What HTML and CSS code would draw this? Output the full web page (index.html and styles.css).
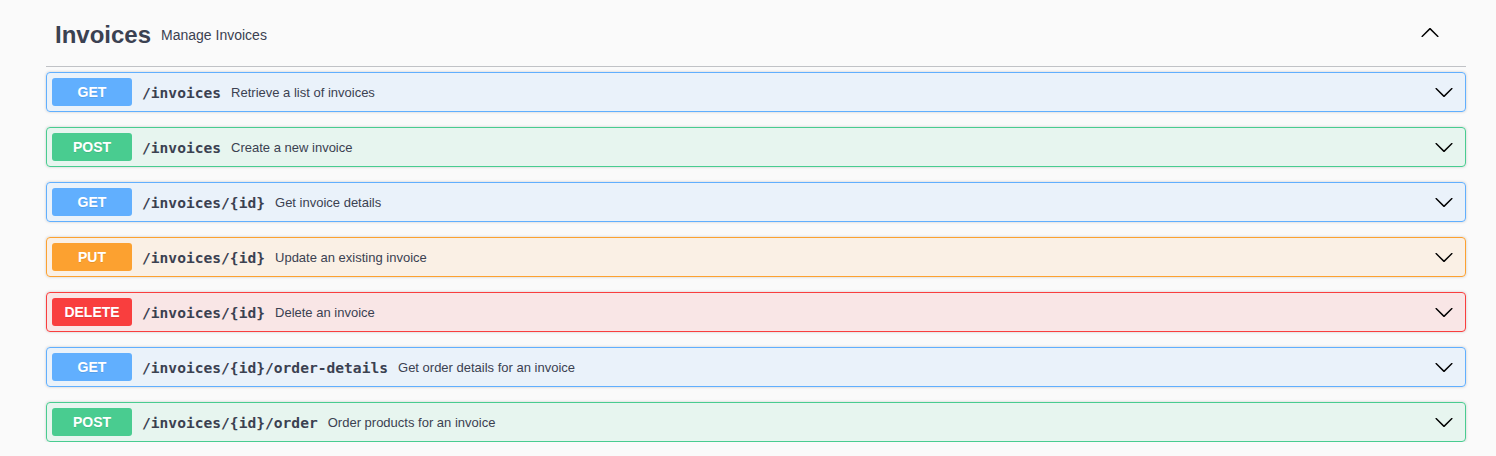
FILE: index.html
```html
<!DOCTYPE html>
<html lang="en">
<head>
<meta charset="utf-8">
<title>Invoices</title>
<link rel="stylesheet" href="styles.css">
</head>
<body>
<div class="page">
  <section class="tag-section">
    <h3 class="tag-header">
      <span class="tag-title">Invoices</span>
      <small class="tag-desc">Manage Invoices</small>
      <button class="tag-toggle" aria-label="Collapse">
        <svg width="20" height="20" viewBox="0 0 20 20"><path d="M17.418 14.908c.272.268.709.268.979 0s.271-.701 0-.969l-7.908-7.83c-.27-.268-.707-.268-.979 0l-7.908 7.83c-.27.268-.27.701 0 .969.271.268.709.268.979 0L10 7.77l7.418 7.138z"/></svg>
      </button>
    </h3>
    <div class="ops">
      <div class="op op-get">
        <span class="method">GET</span>
        <span class="path">/invoices</span>
        <span class="desc">Retrieve a list of invoices</span>
        <svg class="arrow" width="20" height="20" viewBox="0 0 20 20"><path d="M17.418 6.109c.272-.268.709-.268.979 0s.271.701 0 .969l-7.908 7.83c-.27.268-.707.268-.979 0l-7.908-7.83c-.27-.268-.27-.701 0-.969.271-.268.709-.268.979 0L10 13.25l7.418-7.141z"/></svg>
      </div>
      <div class="op op-post">
        <span class="method">POST</span>
        <span class="path">/invoices</span>
        <span class="desc">Create a new invoice</span>
        <svg class="arrow" width="20" height="20" viewBox="0 0 20 20"><path d="M17.418 6.109c.272-.268.709-.268.979 0s.271.701 0 .969l-7.908 7.83c-.27.268-.707.268-.979 0l-7.908-7.830c-.27-.268-.27-.701 0-.969.271-.268.709-.268.979 0L10 13.25l7.418-7.141z"/></svg>
      </div>
      <div class="op op-get">
        <span class="method">GET</span>
        <span class="path">/invoices/{id}</span>
        <span class="desc">Get invoice details</span>
        <svg class="arrow" width="20" height="20" viewBox="0 0 20 20"><path d="M17.418 6.109c.272-.268.709-.268.979 0s.271.701 0 .969l-7.908 7.83c-.27.268-.707.268-.979 0l-7.908-7.83c-.27-.268-.27-.701 0-.969.271-.268.709-.268.979 0L10 13.25l7.418-7.141z"/></svg>
      </div>
      <div class="op op-put">
        <span class="method">PUT</span>
        <span class="path">/invoices/{id}</span>
        <span class="desc">Update an existing invoice</span>
        <svg class="arrow" width="20" height="20" viewBox="0 0 20 20"><path d="M17.418 6.109c.272-.268.709-.268.979 0s.271.701 0 .969l-7.908 7.83c-.27.268-.707.268-.979 0l-7.908-7.83c-.27-.268-.27-.701 0-.969.271-.268.709-.268.979 0L10 13.25l7.418-7.141z"/></svg>
      </div>
      <div class="op op-delete">
        <span class="method">DELETE</span>
        <span class="path">/invoices/{id}</span>
        <span class="desc">Delete an invoice</span>
        <svg class="arrow" width="20" height="20" viewBox="0 0 20 20"><path d="M17.418 6.109c.272-.268.709-.268.979 0s.271.701 0 .969l-7.908 7.83c-.27.268-.707.268-.979 0l-7.908-7.83c-.27-.268-.27-.701 0-.969.271-.268.709-.268.979 0L10 13.25l7.418-7.141z"/></svg>
      </div>
      <div class="op op-get">
        <span class="method">GET</span>
        <span class="path">/invoices/{id}/order-details</span>
        <span class="desc">Get order details for an invoice</span>
        <svg class="arrow" width="20" height="20" viewBox="0 0 20 20"><path d="M17.418 6.109c.272-.268.709-.268.979 0s.271.701 0 .969l-7.908 7.83c-.27.268-.707.268-.979 0l-7.908-7.83c-.27-.268-.27-.701 0-.969.271-.268.709-.268.979 0L10 13.25l7.418-7.141z"/></svg>
      </div>
      <div class="op op-post">
        <span class="method">POST</span>
        <span class="path">/invoices/{id}/order</span>
        <span class="desc">Order products for an invoice</span>
        <svg class="arrow" width="20" height="20" viewBox="0 0 20 20"><path d="M17.418 6.109c.272-.268.709-.268.979 0s.271.701 0 .969l-7.908 7.83c-.27.268-.707.268-.979 0l-7.908-7.83c-.27-.268-.27-.701 0-.969.271-.268.709-.268.979 0L10 13.25l7.418-7.141z"/></svg>
      </div>
    </div>
  </section>
</div>
</body>
</html>
```
FILE: styles.css
```css
html, body {
  margin: 0;
  padding: 0;
  background: #fafafa;
  font-family: "Liberation Sans", Arial, sans-serif;
  color: #3b4151;
}

.page {
  padding: 0 30px 0 46px;
}

.tag-section {
  width: 1420px;
}

.tag-header {
  display: flex;
  align-items: center;
  box-sizing: border-box;
  height: 67px;
  margin: 0 0 5px;
  padding: 4px 26px 0 9px;
  border-bottom: 1px solid rgba(59, 65, 81, 0.3);
  font-weight: normal;
}

.tag-title {
  font-size: 24px;
  font-weight: bold;
  color: #3b4151;
}

.tag-desc {
  flex: 1 1 auto;
  font-size: 14px;
  padding: 0 10px;
  color: #3b4151;
}

.tag-toggle {
  display: flex;
  border: none;
  background: none;
  padding: 0;
  margin: 0 0 6px;
  cursor: pointer;
}

.tag-toggle svg {
  fill: #000;
}

.ops {
  display: flex;
  flex-direction: column;
  gap: 15px;
}

.op {
  display: flex;
  align-items: center;
  box-sizing: border-box;
  height: 40px;
  padding: 5px 11px 5px 5px;
  border: 1px solid;
  border-radius: 4px;
  box-shadow: 0 0 3px rgba(0, 0, 0, 0.19);
}

.method {
  min-width: 80px;
  height: 28px;
  line-height: 28px;
  border-radius: 3px;
  text-align: center;
  color: #fff;
  font-size: 14px;
  font-weight: bold;
  text-shadow: 0 1px 0 rgba(0, 0, 0, 0.1);
}

.path {
  padding: 0 10px;
  font-family: "DejaVu Sans Mono", monospace;
  font-weight: bold;
  font-size: 14.6px;
  color: #3b4151;
}

.desc {
  flex: 1 1 auto;
  font-size: 13px;
  color: #3b4151;
}

.arrow {
  fill: #000;
  flex: none;
}

.op-get { background: rgba(97, 175, 254, 0.1); border-color: #61affe; }
.op-get .method { background: #61affe; }

.op-post { background: rgba(73, 204, 144, 0.1); border-color: #49cc90; }
.op-post .method { background: #49cc90; }

.op-put { background: rgba(252, 161, 48, 0.1); border-color: #fca130; }
.op-put .method { background: #fca130; }

.op-delete { background: rgba(249, 62, 62, 0.1); border-color: #f93e3e; }
.op-delete .method { background: #f93e3e; }
```
